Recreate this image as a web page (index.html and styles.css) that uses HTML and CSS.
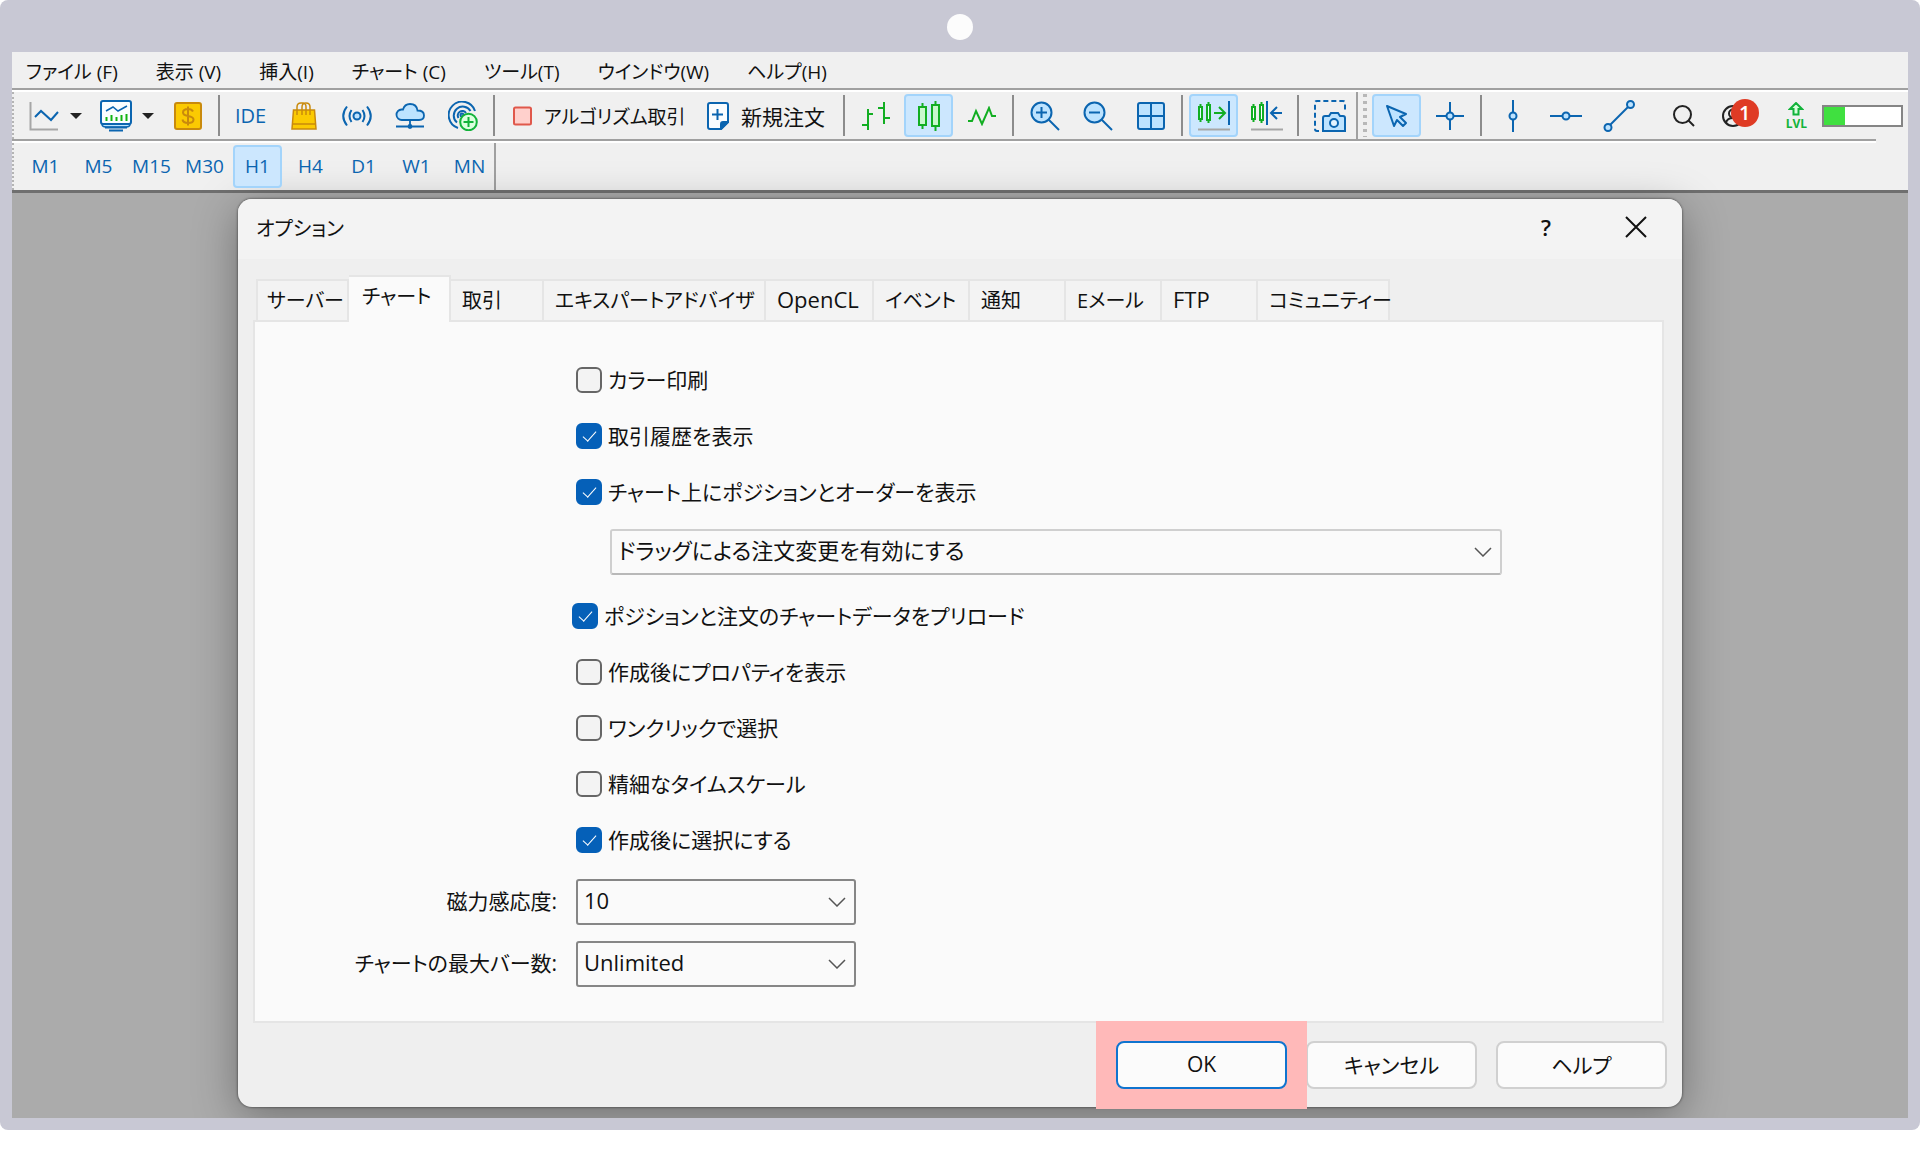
FILE: index.html
```html
<!DOCTYPE html>
<html lang="ja">
<head>
<meta charset="utf-8">
<meta name="viewport" content="width=device-width, initial-scale=1">
<title>オプション</title>
<link rel="stylesheet" href="styles.css">
</head>
<body>
<div class="device">
  <div class="device-top"><span class="camera"></span></div>
  <div class="screen">
    <nav class="menubar">
      <a href="#">ファイル (F)</a>
      <a href="#">表示 (V)</a>
      <a href="#">挿入(I)</a>
      <a href="#">チャート (C)</a>
      <a href="#">ツール(T)</a>
      <a href="#">ウインドウ(W)</a>
      <a href="#">ヘルプ(H)</a>
    </nav>
    <div class="rule"></div>

    <div class="toolbar">
      <div class="tools">
        <button class="tool" aria-label="ラインチャート"><svg width="30" height="30" viewBox="0 0 30 30" fill="none"><path d="M1.500 1v27.500H29" stroke="#a6a6a6" stroke-width="2"/><path d="M6 16l6-6 10 9 7-8" stroke="#0b65b0" stroke-width="2"/></svg></button>
        <button class="caret" aria-label="チャートの種類"><svg width="12" height="8" viewBox="0 0 12 8"><path d="M0 1h12L6 7z" fill="#222"/></svg></button>
        <button class="tool" aria-label="プロファイル"><svg width="32" height="32" viewBox="0 0 32 32" fill="none" stroke="#0b65b0" stroke-width="2"><path d="M2 24q0 3 4 3h20q4 0 4-3" fill="#bde3ff" stroke-width="1.500"/><path d="M5 27.500h22M9 30.500h14" stroke-width="2"/><rect x="1" y="1" width="30" height="23" rx="2" fill="#fafdff"/><path d="M6 11l7-4 5 4 9-5" stroke-width="1.500"/><path d="M6.500 17v4M11.500 15v6M16.500 17v4M21.500 15v6M26.500 14v7" stroke="#12b312"/></svg></button>
        <button class="caret" aria-label="プロファイル一覧"><svg width="12" height="8" viewBox="0 0 12 8"><path d="M0 1h12L6 7z" fill="#222"/></svg></button>
        <button class="tool" aria-label="気配値"><svg width="28" height="28" viewBox="0 0 28 28" fill="none" stroke="#c98a0c" stroke-width="2"><rect x="1" y="1" width="26" height="26" rx="2" fill="#fbca02"/><path d="M19 9.500c-1-2-3-2.500-5-2.500-3 0-5 1-5 3.500s2 3 5 3.500 5.500 1 5.500 3.500S17 21 14 21s-5-1-5.500-3.500M14 4.500v19"/></svg></button>
        <span class="sep"></span>
        <button class="tool ide">IDE</button>
        <button class="tool" aria-label="マーケット"><svg width="26" height="28" viewBox="0 0 26 28" fill="none" stroke="#c98a0c" stroke-width="1.500"><path d="M2.500 8h21l1.500 19H1z" fill="#fbca02"/><path d="M2 22h23"/><path d="M6 13V5q0-4 4-4h2q3 0 3 4v8M11 13V5q0-4 4-4 4 0 4 4v8"/></svg></button>
        <button class="tool" aria-label="シグナル"><svg width="30" height="22" viewBox="0 0 30 22" fill="none" stroke="#0b65b0" stroke-width="2"><circle cx="15" cy="11" r="3.500" fill="#bde3ff"/><path d="M9.500 5q-4 6 0 12M20.500 5q4 6 0 12M5 1.500q-7.500 9.500 0 19M25 1.500q7.500 9.500 0 19"/></svg></button>
        <button class="tool" aria-label="仮想ホスティング"><svg width="30" height="26" viewBox="0 0 30 26" fill="none" stroke="#0b65b0" stroke-width="1.800"><path d="M7 17a5 5 0 0 1-.5-10.500H8C9 3 12 1 15 1c4 0 7 2.500 7.500 6.500 4 0 6.500 2 6.500 5s-2 4.500-5 4.500z" fill="#bde3ff"/><path d="M15 17v5M1 23.500h28"/><circle cx="15" cy="23.500" r="1.500" fill="#0b65b0"/></svg></button>
        <button class="tool" aria-label="接続"><svg width="30" height="30" viewBox="0 0 30 30" fill="none" stroke="#0b65b0" stroke-width="2"><path d="M10 27A13.500 13.500 0 1 1 27 10M9 21.500A9 9 0 1 1 22.500 10M10.500 17A4.500 4.500 0 1 1 18 12"/><circle cx="14" cy="14" r="1.500"/><circle cx="20.500" cy="21" r="8.300" fill="#dcffdf" stroke="#12b33a"/><path d="M15.500 21h10M20.500 16v10" stroke="#12b33a"/></svg></button>
        <span class="sep"></span>
        <button class="text-tool algo"><svg width="19" height="20" viewBox="0 0 19 20"><rect x="1" y="1.500" width="17" height="17" rx="1.500" fill="#ffd0cc" stroke="#e0584b" stroke-width="2"/></svg>アルゴリズム取引</button>
        <button class="text-tool order"><svg width="22" height="28" viewBox="0 0 22 28" fill="none" stroke="#0b65b0" stroke-width="2"><path d="M3 1h16q2 0 2 2v17l-7 7H3q-2 0-2-2V3q0-2 2-2z" fill="#fafdff"/><path d="M21 20h-5q-2 0-2 2v5z" fill="#0b65b0"/><path d="M5 12.500h11M10.500 7v11"/></svg>新規注文</button>
        <span class="sep"></span>
        <button class="tool" aria-label="バーチャート"><svg width="30" height="30" viewBox="0 0 30 30" fill="none" stroke="#12ae22" stroke-width="2"><path d="M7 8v21M7 13h5M1 24h6M23 1v22M17 7h6M23 17h6"/></svg></button>
        <button class="tool on" aria-label="ローソク足"><svg width="24" height="30" viewBox="0 0 24 30" fill="#c9f8cd" stroke="#12ae22" stroke-width="2"><path d="M5.500 2v26M18.500 0v30"/><rect x="2" y="6" width="7" height="18"/><rect x="15" y="4" width="7" height="21"/></svg></button>
        <button class="tool" aria-label="ライン"><svg width="30" height="20" viewBox="0 0 30 20" fill="none" stroke="#12ae22" stroke-width="2"><path d="M1 15h4l4-10 6 13L22 2l3 8h4"/></svg></button>
        <span class="sep"></span>
        <button class="tool" aria-label="拡大"><svg width="30" height="30" viewBox="0 0 30 30" fill="none" stroke="#0b65b0" stroke-width="2"><path d="M18.500 18.500L29 29"/><circle cx="11.500" cy="11.500" r="10" fill="#bde3ff"/><path d="M6 11.500h11M11.500 6v11"/></svg></button>
        <button class="tool" aria-label="縮小"><svg width="30" height="30" viewBox="0 0 30 30" fill="none" stroke="#0b65b0" stroke-width="2"><path d="M18.500 18.500L29 29"/><circle cx="11.500" cy="11.500" r="10" fill="#bde3ff"/><path d="M6 11.500h11"/></svg></button>
        <button class="tool" aria-label="ウィンドウの整列"><svg width="28" height="28" viewBox="0 0 28 28" fill="none" stroke="#0b65b0" stroke-width="2"><rect x="1" y="1" width="26" height="26" rx="2" fill="#bde3ff"/><path d="M14 1v26M1 14h26"/></svg></button>
        <span class="sep"></span>
        <button class="tool on" aria-label="自動スクロール"><svg width="32" height="30" viewBox="0 0 32 30" fill="none" stroke="#12ae22" stroke-width="2"><path d="M2.500 3v18M10.500 1v21"/><rect x="1" y="6" width="3" height="12" fill="#dff"/><rect x="9" y="4" width="3" height="15" fill="#dff"/><path d="M16 12h10M21 6l6 6-6 6"/><path d="M31 0v24" stroke="#0b65b0"/><path d="M0 28.500h32" stroke="#a6a6a6"/></svg></button>
        <button class="tool" aria-label="チャートシフト"><svg width="32" height="30" viewBox="0 0 32 30" fill="none" stroke="#12ae22" stroke-width="2"><path d="M2.500 3v18M10.500 1v21"/><rect x="1" y="6" width="3" height="12" fill="#fff"/><rect x="9" y="4" width="3" height="15" fill="#fff"/><path d="M16 0v24M31 12H21M26 6l-6 6 6 6" stroke="#0b65b0"/><path d="M0 28.500h32" stroke="#a6a6a6"/></svg></button>
        <span class="sep"></span>
        <button class="tool" aria-label="スクリーンショット"><svg width="32" height="32" viewBox="0 0 32 32" fill="none" stroke="#0b65b0" stroke-width="2"><path d="M5 31H3q-2 0-2-2V3q0-2 2-2h26q2 0 2 2v9" stroke-dasharray="5 3"/><path d="M9 18q0-2 2-2h4l2-3h7l2 3h3q2 0 2 2v13H9z" fill="#bde3ff"/><circle cx="20" cy="23" r="4" fill="#e4f4ff"/></svg></button>
      </div>
      <div class="tools drawing">
        <button class="tool on" aria-label="カーソル"><svg width="24" height="24" viewBox="0 0 24 24" fill="#bde3ff" stroke="#0b65b0" stroke-width="2" stroke-linejoin="round"><path d="M2 2l19 8-6 3 6 6-3 3-6-6-3 6z"/></svg></button>
        <button class="tool" aria-label="十字カーソル"><svg width="28" height="28" viewBox="0 0 28 28" fill="#bde3ff" stroke="#0b65b0" stroke-width="2"><path d="M14 0v28M0 14h28"/><circle cx="14" cy="14" r="3.500"/></svg></button>
        <span class="sep"></span>
        <button class="tool" aria-label="垂直線"><svg width="32" height="32" viewBox="0 0 32 32" fill="#bde3ff" stroke="#0b65b0" stroke-width="2"><path d="M16 0v32"/><circle cx="16" cy="16" r="3.500"/></svg></button>
        <button class="tool" aria-label="水平線"><svg width="32" height="32" viewBox="0 0 32 32" fill="#bde3ff" stroke="#0b65b0" stroke-width="2"><path d="M0 16h32"/><circle cx="16" cy="16" r="3.500"/></svg></button>
        <button class="tool" aria-label="トレンドライン"><svg width="32" height="32" viewBox="0 0 32 32" fill="#bde3ff" stroke="#0b65b0" stroke-width="2"><path d="M5 27L27 5"/><circle cx="5" cy="27.500" r="3.500"/><circle cx="27.500" cy="4.500" r="3.500"/></svg></button>
      </div>
      <div class="status">
        <button class="plain" aria-label="検索"><svg width="22" height="22" viewBox="0 0 22 22" fill="none" stroke="#222" stroke-width="2"><circle cx="9.500" cy="9.500" r="8.500"/><path d="M15.500 15.500L21 21"/></svg></button>
        <button class="plain account" aria-label="アカウント"><svg width="22" height="22" viewBox="0 0 22 22" fill="none" stroke="#222" stroke-width="2"><circle cx="11" cy="11" r="10"/><circle cx="11" cy="8.500" r="4"/><path d="M4 18q1-5 7-5t7 5"/></svg><span class="badge">1</span></button>
        <span class="level"><svg width="16" height="14" viewBox="0 0 16 14" fill="#d9ffdd" stroke="#12b33a" stroke-width="2"><path d="M8 1l6 6h-3.500v5.500h-5V7H2z"/></svg>LVL</span>
        <progress class="meter" value="27" max="100" aria-label="接続状態"></progress>
      </div>
    </div>
    <div class="rule short"></div>

    <div class="timeframes">
      <button>M1</button><button>M5</button><button>M15</button><button>M30</button><button class="on">H1</button><button>H4</button><button>D1</button><button>W1</button><button>MN</button>
    </div>

    <main class="workspace">
      <section class="dialog" role="dialog" aria-labelledby="dlg-title">
        <header class="titlebar">
          <h1 id="dlg-title">オプション</h1>
          <button class="plain help" aria-label="ヘルプ">?</button>
          <button class="plain" aria-label="閉じる"><svg width="22" height="22" viewBox="0 0 22 22" fill="none" stroke="#111" stroke-width="2"><path d="M1 1l20 20M21 1L1 21"/></svg></button>
        </header>

        <div class="tabs" role="tablist">
          <button role="tab" class="tab w-s">サーバー</button>
          <button role="tab" class="tab w-m active" aria-selected="true">チャート</button>
          <button role="tab" class="tab w-s">取引</button>
          <button role="tab" class="tab w-xl">エキスパートアドバイザ</button>
          <button role="tab" class="tab w-l latin">OpenCL</button>
          <button role="tab" class="tab">イベント</button>
          <button role="tab" class="tab">通知</button>
          <button role="tab" class="tab">Eメール</button>
          <button role="tab" class="tab latin">FTP</button>
          <button role="tab" class="tab w-xxl">コミュニティー</button>
        </div>

        <form class="panel" id="options">
          <div class="options">
            <label class="check"><input type="checkbox">カラー印刷</label>
            <label class="check"><input type="checkbox" checked>取引履歴を表示</label>
            <label class="check"><input type="checkbox" checked>チャート上にポジションとオーダーを表示</label>
            <select class="combo wide" aria-label="注文変更"><option>ドラッグによる注文変更を有効にする</option></select>
            <label class="check outdent"><input type="checkbox" checked>ポジションと注文のチャートデータをプリロード</label>
            <label class="check"><input type="checkbox">作成後にプロパティを表示</label>
            <label class="check"><input type="checkbox">ワンクリックで選択</label>
            <label class="check"><input type="checkbox">精細なタイムスケール</label>
            <label class="check"><input type="checkbox" checked>作成後に選択にする</label>
          </div>
          <div class="fields">
            <label for="magnet">磁力感応度:</label>
            <select class="combo" id="magnet"><option>10</option></select>
            <label for="bars">チャートの最大バー数:</label>
            <select class="combo" id="bars"><option>Unlimited</option></select>
          </div>
        </form>

        <footer class="actions">
          <span class="spotlight"><button class="btn primary" form="options" type="button">OK</button></span>
          <button class="btn" type="button">キャンセル</button>
          <button class="btn" type="button">ヘルプ</button>
        </footer>
      </section>
    </main>
  </div>
</div>
</body>
</html>
```
FILE: styles.css
```css
:root {
  --blue: #0b65b0;
  --bezel: #c8c8d4;
  --face: #f0f0f0;
  --line: #a0a0a0;
  --ui: "Open Sans", "Noto Sans CJK JP", sans-serif;
}

* { box-sizing: border-box; }

body {
  margin: 0;
  background: #fff;
  color: #111;
  font-family: var(--ui);
  font-feature-settings: "palt";
  font-size: 20px;
}

button, select, input {
  margin: 0;
  font: inherit;
  font-feature-settings: "palt";
  color: inherit;
}

button {
  padding: 0;
  border: 0;
  background: none;
}

svg { display: block; flex: none; }

/* Device frame */
.device {
  padding: 0 12px 12px;
  border-radius: 8px;
  background: var(--bezel);
  box-shadow: 0 248px 16px -238px rgba(0, 0, 0, .12);
}

.device-top {
  display: flex;
  align-items: center;
  justify-content: center;
  height: 52px;
  padding-top: 2px;
}

.camera {
  width: 26px;
  height: 26px;
  border-radius: 50%;
  background: #fcfcfc;
}

.screen {
  overflow: hidden;
  background: var(--face);
}

/* Menu */
.menubar {
  display: flex;
  gap: 38px;
  height: 36px;
  padding: 4px 14px 0;
  align-items: center;
  font-size: 19px;
  line-height: 32px;
}

.menubar a {
  color: inherit;
  text-decoration: none;
  white-space: nowrap;
}

.rule {
  height: 4px;
  border-top: 2px solid var(--line);
  border-bottom: 2px solid #fff;
}

.rule.short { margin-right: 32px; }

/* Toolbar */
.toolbar {
  display: flex;
  height: 47px;
}

.tools {
  display: flex;
  align-items: center;
  padding-left: 3px;
  border-left: 2px dotted #b4b4b4;
}

.tool {
  display: flex;
  align-items: center;
  justify-content: center;
  width: 49px;
  height: 43px;
  margin: 0 2px;
  border-radius: 4px;
}

.on {
  border: 2px solid #a3d4fb;
  background: #cce7fe;
}

.tool.ide { color: var(--blue); }

.caret { width: 19px; height: 43px; }

.sep {
  width: 10px;
  height: 41px;
  background: linear-gradient(#8c8c8c, #8c8c8c) 4px 0 / 2px 100% no-repeat;
}

.text-tool {
  display: flex;
  align-items: center;
  height: 43px;
  gap: 12px;
  padding-left: 14px;
  white-space: nowrap;
}

.algo { width: 194px; font-size: 19px; }
.order { width: 146px; font-size: 21px; }

.drawing {
  padding-left: 5px;
  border-left: 2px solid var(--line);
}

.drawing::before {
  content: "";
  width: 4px;
  height: 43px;
  margin-right: 3px;
  background: repeating-linear-gradient(#b8b8b8 0 3px, transparent 3px 7px);
}

.status {
  display: flex;
  align-items: center;
  gap: 27px;
  margin-left: auto;
  padding-right: 5px;
}

.plain { display: flex; }

.account {
  position: relative;
  width: 37px;
}

.badge {
  position: absolute;
  left: 9px;
  top: -6px;
  width: 28px;
  height: 28px;
  border-radius: 50%;
  background: #df3b24;
  color: #fff;
  font-size: 20px;
  font-weight: 600;
  line-height: 28px;
}

.level {
  display: flex;
  flex-direction: column;
  align-items: center;
  gap: 2px;
  margin-right: -12px;
  color: #12b33a;
  font-size: 12px;
  font-weight: 700;
  line-height: 12px;
}

.meter {
  appearance: none;
  width: 81px;
  height: 22px;
  border: 2px solid #858585;
  background: #fff;
}

.meter::-webkit-progress-bar { background: #fff; }
.meter::-webkit-progress-value { background: #40e040; }

/* Time frames */
.timeframes {
  display: flex;
  align-items: center;
  width: max-content;
  height: 47px;
  padding-left: 5px;
  border-left: 2px dotted #b4b4b4;
  border-right: 2px solid var(--line);
  color: var(--blue);
  font-size: 19px;
}

.timeframes button {
  width: 49px;
  height: 43px;
  margin: 0 2px;
  padding-bottom: 2px;
  border-radius: 4px;
}

.timeframes button:last-child { margin-right: 0; }

/* Workspace and dialog */
.workspace {
  padding: 6px 226px 11px;
  border-top: 3px solid #6f6f6f;
  background: #ababab;
}

.dialog {
  border-radius: 14px;
  background: #efefef;
  box-shadow: 0 0 2px 1px rgba(0, 0, 0, .3), 0 10px 44px rgba(0, 0, 0, .34);
}

.titlebar {
  display: flex;
  align-items: center;
  height: 60px;
  padding: 0 35px 4px 18px;
  border-radius: 14px 14px 0 0;
  background: #f3f3f3;
}

.titlebar h1 {
  margin: 0;
  font-size: 20px;
  font-weight: 400;
}

.help {
  margin: 0 74px 0 auto;
  font-size: 22px;
  font-weight: 600;
  line-height: 30px;
}

.tabs {
  display: flex;
  align-items: flex-end;
  height: 61px;
  padding-left: 18px;
}

.tab {
  width: 96px;
  height: 41px;
  padding: 0 0 3px 11px;
  border: 2px solid #e5e5e5;
  border-width: 2px 2px 0 0;
  background: #f3f3f3;
  font-size: 20px;
  text-align: left;
  white-space: nowrap;
}

.tab.latin { font-size: 22px; }
.tab:first-child { border-left-width: 2px; padding-left: 9px; }
.w-s { width: 93px; }
.w-m { width: 102px; }
.w-l { width: 108px; }
.w-xl { width: 222px; }
.w-xxl { width: 132px; }

.tab.active {
  z-index: 1;
  height: 47px;
  margin-bottom: -2px;
  padding: 0 0 9px 13px;
  background: #fafafa;
}

.panel {
  margin: 0 18px 0 15px;
  padding: 30px 160px 34px 0;
  border: 2px solid #e5e5e5;
  background: #fafafa;
}

.options {
  display: flex;
  flex-direction: column;
  padding-left: 321px;
}

.check {
  display: flex;
  align-items: center;
  gap: 6px;
  height: 56px;
  font-size: 21px;
  line-height: 30px;
  white-space: nowrap;
}

.check.outdent { margin-left: -4px; }

.check input {
  appearance: none;
  display: grid;
  place-items: center;
  flex: none;
  width: 26px;
  height: 26px;
  border: 2px solid #666;
  border-radius: 6px;
  background: #f3f3f3;
}

.check input:checked {
  border-color: #0560b8;
  background: #0560b8;
}

.check input:checked::before {
  content: "";
  width: 6px;
  height: 12px;
  margin-top: -4px;
  border: solid #fff;
  border-width: 0 1px 1px 0;
  transform: rotate(42deg);
}

.combo {
  appearance: none;
  width: 280px;
  height: 46px;
  padding: 0 44px 4px 6px;
  border: 2px solid #868686;
  border-radius: 3px;
  background: #fafafa url("data:image/svg+xml,%3Csvg xmlns='http://www.w3.org/2000/svg' width='18' height='10' fill='none' stroke='%23555' stroke-width='1.500'%3E%3Cpath d='M1 1l8 8 8-8'/%3E%3C/svg%3E") right 8px center no-repeat;
  font-size: 22px;
}

.combo.wide {
  width: auto;
  margin: 9px 0 13px 34px;
  border-color: #cfcfcf;
  border-bottom-color: #b8b8b8;
}

.fields {
  display: grid;
  grid-template-columns: 302px 280px;
  gap: 16px 19px;
  align-items: center;
  padding-top: 11px;
}

.fields label {
  padding-bottom: 5px;
  font-size: 21px;
  text-align: right;
  white-space: nowrap;
}

.actions {
  display: flex;
  justify-content: flex-end;
  gap: 19px;
  padding: 18px 15px 18px 0;
}

.btn {
  width: 171px;
  height: 48px;
  padding-bottom: 3px;
  border: 2px solid #d0d0d0;
  border-radius: 8px;
  background: #fbfbfb;
  font-size: 21px;
}

.btn.primary {
  position: relative;
  border-color: #0f74cf;
}

/* Highlight that calls out the confirming button */
.spotlight {
  display: flex;
  position: relative;
  z-index: 1;
}

.spotlight::before {
  content: "";
  position: absolute;
  inset: -20px;
  background: #ffb9b9;
}
```
